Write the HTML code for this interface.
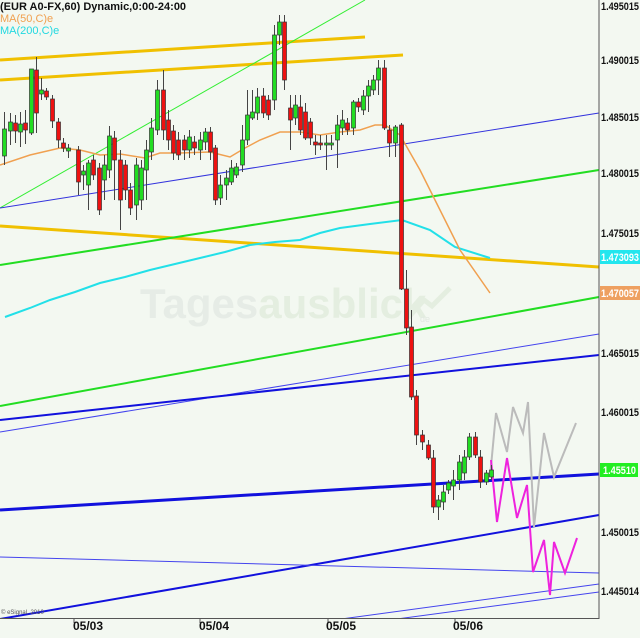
<!DOCTYPE html>
<html><head><meta charset="utf-8"><style>
html,body{margin:0;padding:0;background:#f3f8f1;}
svg{display:block}
text{font-family:"Liberation Sans",sans-serif;}
</style></head><body>
<svg id="s" width="640" height="638" viewBox="0 0 640 638" xmlns="http://www.w3.org/2000/svg">
<rect width="640" height="638" fill="#f3f8f1"/>
<text x="140" y="318" font-size="42" font-weight="bold" fill="#e6ece6">Tages<tspan fill="#e4eee0">ausblick</tspan></text>
<text x="420" y="322" font-size="9" fill="#e1e8e1">de</text>
<polyline points="408,318 424,300 432,306 450,288" fill="none" stroke="#e4eee0" stroke-width="5"/>
<g fill="none" stroke-linecap="butt">
<line x1="0" y1="60" x2="365" y2="37" stroke="#f0c000" stroke-width="3"/>
<line x1="0" y1="80" x2="403" y2="55" stroke="#f0c000" stroke-width="3"/>
<line x1="0" y1="226" x2="599" y2="267" stroke="#f0c000" stroke-width="3"/>
<line x1="0" y1="208" x2="365" y2="0" stroke="#33ee33" stroke-width="1"/>
<line x1="0" y1="208" x2="599" y2="113" stroke="#3333dd" stroke-width="1"/>
<line x1="0" y1="265" x2="599" y2="170" stroke="#22dd22" stroke-width="2"/>
<line x1="0" y1="406" x2="599" y2="297" stroke="#22dd22" stroke-width="2"/>
<line x1="0" y1="432" x2="599" y2="334" stroke="#4444ee" stroke-width="1"/>
<line x1="0" y1="420" x2="599" y2="355" stroke="#1111dd" stroke-width="2"/>
<line x1="0" y1="510" x2="599" y2="474" stroke="#1111dd" stroke-width="3"/>
<line x1="0" y1="619" x2="599" y2="515" stroke="#1111dd" stroke-width="2"/>
<line x1="0" y1="557" x2="599" y2="573" stroke="#4444ee" stroke-width="1"/>
<line x1="260" y1="630" x2="599" y2="584" stroke="#4444ee" stroke-width="1"/>
<line x1="300" y1="632" x2="599" y2="592" stroke="#4444ee" stroke-width="1"/>
<polyline stroke="#22e0e8" stroke-width="2" points="5,317 30,308 50,300 75,292 100,283 125,277 150,270 175,264 200,258 225,252 250,245 275,242 300,240 320,233 340,228 370,224 402,220 430,230 455,247 490,258"/>
<polyline stroke="#f0a050" stroke-width="1.5" points="0,165 30,155 60,148 80,150 100,155 120,154 145,158 160,153 180,153 210,152 230,157 245,148 260,140 280,132 300,132 320,135 340,132 360,130 375,125 385,125 400,135 420,170 440,210 460,250 490,293"/>
<polyline stroke="#bbbbbb" stroke-width="2" points="490,477 496,413 507,452 513,407 523,433 528,402 534,527 544,433 554,477 576,423"/>
<polyline stroke="#ee22dd" stroke-width="2" points="491,460 497,522 507,458 517,518 527,485 533,572 544,540 550,595 554,542 565,573 577,538"/>
</g>
<g id="c"></g>
<rect x="599" y="0" width="41" height="638" fill="#f3f8f1"/>
<rect x="0" y="619" width="640" height="19" fill="#f3f8f1"/>
<line x1="599" y1="0" x2="599" y2="619" stroke="#555" stroke-width="1"/>
<line x1="0" y1="618.5" x2="599" y2="618.5" stroke="#555" stroke-width="1"/>
<g stroke="#555"><line x1="74" y1="619" x2="74" y2="623"/><line x1="200" y1="619" x2="200" y2="623"/><line x1="328" y1="619" x2="328" y2="623"/><line x1="455" y1="619" x2="455" y2="623"/></g>
<g font-size="11" font-weight="bold" fill="#111">
<text x="601" y="10" textLength="38" lengthAdjust="spacingAndGlyphs">1.495015</text>
<text x="601" y="64" textLength="38" lengthAdjust="spacingAndGlyphs">1.490015</text>
<text x="601" y="121" textLength="38" lengthAdjust="spacingAndGlyphs">1.485015</text>
<text x="601" y="177" textLength="38" lengthAdjust="spacingAndGlyphs">1.480015</text>
<text x="601" y="237" textLength="38" lengthAdjust="spacingAndGlyphs">1.475015</text>
<text x="601" y="357" textLength="38" lengthAdjust="spacingAndGlyphs">1.465015</text>
<text x="601" y="416" textLength="38" lengthAdjust="spacingAndGlyphs">1.460015</text>
<text x="601" y="536" textLength="38" lengthAdjust="spacingAndGlyphs">1.450015</text>
<text x="601" y="595" textLength="38" lengthAdjust="spacingAndGlyphs">1.445014</text>
</g>
<rect x="600" y="250" width="40" height="14" fill="#22e6ee"/>
<text x="601" y="261" font-size="11" font-weight="bold" fill="#fff" textLength="38" lengthAdjust="spacingAndGlyphs">1.473093</text>
<rect x="600" y="286" width="40" height="14" fill="#eea060"/>
<text x="601" y="297" font-size="11" font-weight="bold" fill="#fff" textLength="38" lengthAdjust="spacingAndGlyphs">1.470057</text>
<rect x="600" y="463" width="38" height="14" fill="#22ee22"/>
<text x="603" y="474" font-size="11" font-weight="bold" fill="#fff" textLength="33" lengthAdjust="spacingAndGlyphs">1.45510</text>
<g font-size="12" font-weight="bold" fill="#111" style="font-family:'Liberation Serif',serif">
<text x="73" y="630">05/03</text><text x="199" y="630">05/04</text><text x="326" y="630">05/05</text><text x="453" y="630">05/06</text>
</g>
<text x="1" y="614" font-size="6" fill="#555">© eSignal, 2010</text>
<text x="0" y="10" font-size="11" font-weight="bold" fill="#111">(EUR A0-FX,60) Dynamic,0:00-24:00</text>
<text x="0" y="22" font-size="11" fill="#f0a050">MA(50,C)e</text>
<text x="0" y="34" font-size="11" fill="#22d8e0">MA(200,C)e</text>
</svg>
<script>
var d=[[4,'g',129,156,112,165],[10,'g',122,131,113,145],[15,'r',123,131,115,143],[20,'g',124,132,112,147],[25,'r',123,130,110,144],[31,'g',69,133,69,135],[36,'r',70,113,57,133],[41,'g',90,94,78,100],[46,'r',91,97,88,100],[52,'r',99,121,95,128],[58,'r',122,140,118,148],[63,'r',143,148,138,152],[68,'g',148,151,144,158],[78,'r',150,182,146,195],[83,'g',171,175,165,190],[88,'g',163,185,160,210],[93,'r',160,175,155,180],[99,'r',168,210,163,215],[104,'g',165,180,155,200],[109,'g',136,170,126,178],[114,'r',138,160,131,200],[120,'r',160,200,150,230],[125,'r',165,190,160,200],[130,'r',190,208,183,215],[136,'g',165,205,158,220],[141,'g',168,200,160,210],[146,'g',150,170,140,200],[151,'g',128,152,118,160],[157,'g',90,130,80,135],[163,'r',90,130,70,140],[168,'r',120,140,110,150],[173,'r',131,153,125,160],[178,'r',140,155,132,160],[184,'r',140,150,135,160],[189,'g',137,150,130,158],[194,'r',142,148,136,155],[200,'g',140,150,132,160],[205,'g',132,142,128,150],[210,'r',132,152,127,160],[215,'r',148,200,145,205],[220,'g',185,198,175,205],[226,'g',178,185,170,200],[231,'g',168,182,160,185],[236,'g',167,175,163,178],[242,'g',140,165,125,172],[247,'g',115,140,90,145],[252,'g',112,118,90,120],[257,'g',97,113,88,120],[263,'r',96,113,88,118],[268,'r',100,115,95,120],[274,'g',35,100,25,110],[279,'g',22,35,15,45],[284,'r',22,80,15,90],[290,'r',108,120,95,150],[295,'g',105,118,95,125],[300,'r',107,130,95,135],[305,'r',112,138,103,140],[310,'r',122,138,118,145],[315,'r',142,145,135,155],[320,'r',143,145,135,150],[326,'g',143,145,135,170],[331,'g',143,145,135,150],[337,'g',125,140,115,168],[342,'g',120,128,110,135],[347,'r',123,130,118,135],[353,'g',102,128,100,135],[358,'r',102,107,98,112],[363,'g',96,110,90,115],[368,'g',86,96,80,112],[373,'g',80,90,75,95],[378,'g',68,80,60,95],[384,'r',68,128,60,130],[389,'r',130,143,125,157],[395,'g',127,143,125,157],[401,'r',125,289,123,290],[406,'r',289,328,270,335],[411,'r',327,397,310,400],[416,'r',396,435,390,445],[422,'r',435,442,430,450],[428,'r',445,458,440,460],[433,'r',458,507,450,513],[438,'g',500,507,495,520],[443,'g',492,502,485,510],[448,'g',483,490,480,494],[453,'g',480,486,470,500],[459,'g',462,480,455,490],[464,'g',457,473,450,480],[469,'g',437,457,433,460],[475,'r',437,455,432,458],[480,'r',457,482,450,488],[486,'g',473,482,470,485],[491,'g',470,477,465,480]];
var s='';d.forEach(function(c){var x=c[0];s+='<line x1="'+(x+0.5)+'" y1="'+c[4]+'" x2="'+(x+0.5)+'" y2="'+c[5]+'" stroke="#444" stroke-width="1"/>';s+='<rect x="'+(x-1.5)+'" y="'+c[2]+'" width="4" height="'+Math.max(2,c[3]-c[2])+'" fill="'+(c[1]=='g'?'#22dd22':'#ee1111')+'" stroke="#333" stroke-width="0.7"/>';});
document.getElementById('c').innerHTML=s;
</script>
</body></html>
